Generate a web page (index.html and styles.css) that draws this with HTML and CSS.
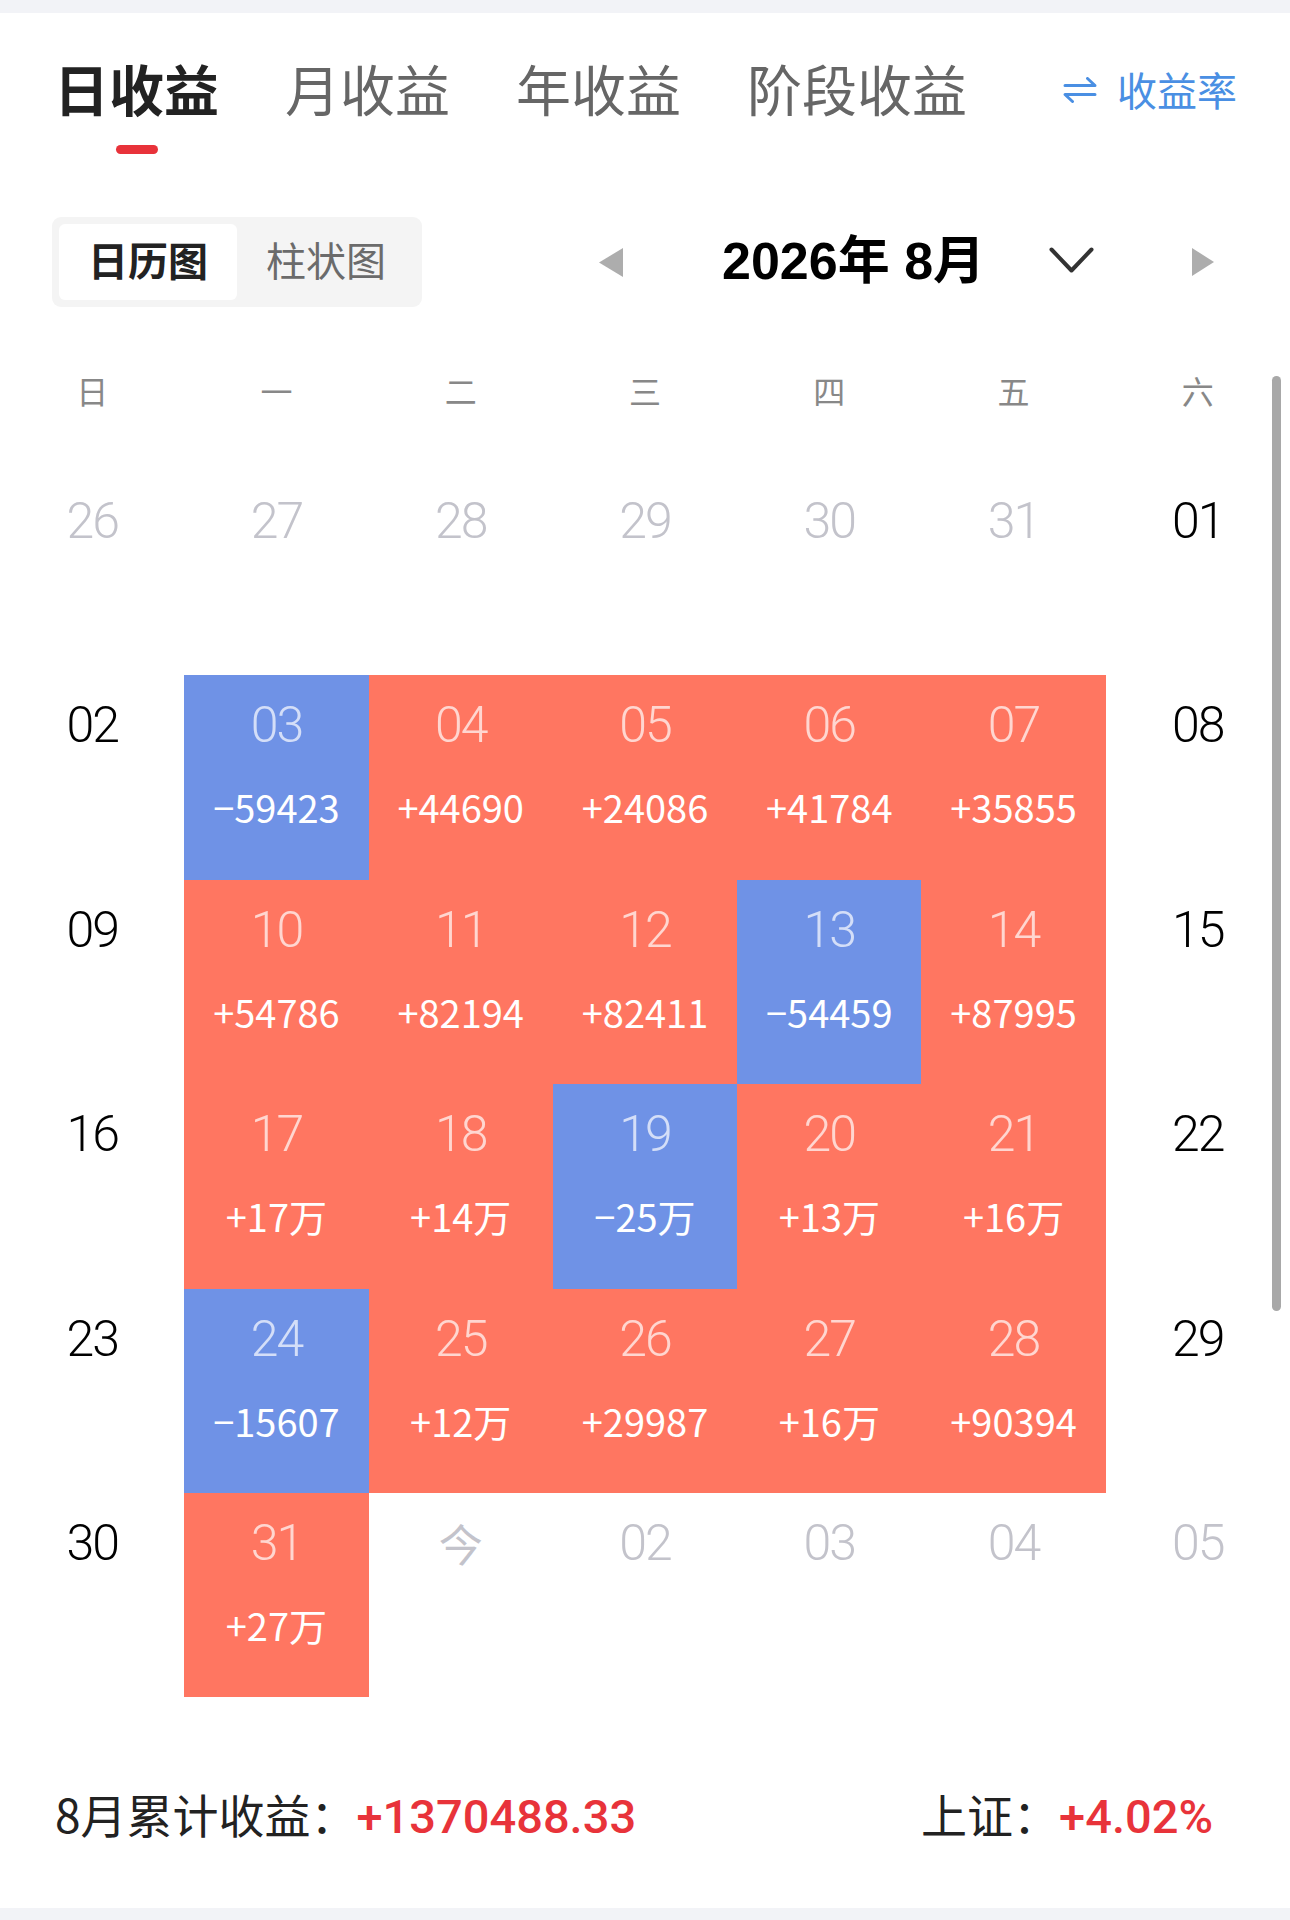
FILE: index.html
```html
<!DOCTYPE html>
<html lang="zh-CN">
<head>
<meta charset="utf-8">
<title>日收益</title>
<link rel="stylesheet" href="styles.css">
</head>
<body>
<div class="page">
  <div class="strip"></div>
  <header class="header">
    <nav class="tabs">
      <div class="tab active"><span>日收益</span><i class="bar"></i></div>
      <div class="tab">月收益</div>
      <div class="tab">年收益</div>
      <div class="tab">阶段收益</div>
    </nav>
    <div class="rate">
      <svg class="swap" width="34" height="26" viewBox="0 0 34 26"><path d="M2 8.5H32L24.5 1.5M32 17.5H2L9.5 24.5" fill="none" stroke="#4a8fe3" stroke-width="3" stroke-linecap="round" stroke-linejoin="round"/></svg>
      <span>收益率</span>
    </div>
  </header>

  <div class="toolbar">
    <div class="seg">
      <div class="seg-item on">日历图</div>
      <div class="seg-item">柱状图</div>
    </div>
    <svg class="tri prev" width="24" height="29" viewBox="0 0 24 29"><path d="M24 0V29L0 14.5Z" fill="#adadad"/></svg>
    <div class="title">2026年 8月</div>
    <svg class="chev" width="45" height="27" viewBox="0 0 45 27"><path d="M2.5 2.5L22.5 23.5L42.5 2.5" fill="none" stroke="#333" stroke-width="4" stroke-linecap="round" stroke-linejoin="round"/></svg>
    <svg class="tri next" width="22" height="28" viewBox="0 0 22 28"><path d="M0 0V28L22 14Z" fill="#adadad"/></svg>
  </div>

  <div class="weekdays">
    <div>日</div><div>一</div><div>二</div><div>三</div><div>四</div><div>五</div><div>六</div>
  </div>

  <div class="grid">
    <div class="cell out"><span class="d">26</span></div>
    <div class="cell out"><span class="d">27</span></div>
    <div class="cell out"><span class="d">28</span></div>
    <div class="cell out"><span class="d">29</span></div>
    <div class="cell out"><span class="d">30</span></div>
    <div class="cell out"><span class="d">31</span></div>
    <div class="cell"><span class="d">01</span></div>

    <div class="cell"><span class="d">02</span></div>
    <div class="cell loss"><span class="d">03</span><span class="v">−59423</span></div>
    <div class="cell gain"><span class="d">04</span><span class="v">+44690</span></div>
    <div class="cell gain"><span class="d">05</span><span class="v">+24086</span></div>
    <div class="cell gain"><span class="d">06</span><span class="v">+41784</span></div>
    <div class="cell gain"><span class="d">07</span><span class="v">+35855</span></div>
    <div class="cell"><span class="d">08</span></div>

    <div class="cell"><span class="d">09</span></div>
    <div class="cell gain"><span class="d">10</span><span class="v">+54786</span></div>
    <div class="cell gain"><span class="d">11</span><span class="v">+82194</span></div>
    <div class="cell gain"><span class="d">12</span><span class="v">+82411</span></div>
    <div class="cell loss"><span class="d">13</span><span class="v">−54459</span></div>
    <div class="cell gain"><span class="d">14</span><span class="v">+87995</span></div>
    <div class="cell"><span class="d">15</span></div>

    <div class="cell"><span class="d">16</span></div>
    <div class="cell gain"><span class="d">17</span><span class="v">+17万</span></div>
    <div class="cell gain"><span class="d">18</span><span class="v">+14万</span></div>
    <div class="cell loss"><span class="d">19</span><span class="v">−25万</span></div>
    <div class="cell gain"><span class="d">20</span><span class="v">+13万</span></div>
    <div class="cell gain"><span class="d">21</span><span class="v">+16万</span></div>
    <div class="cell"><span class="d">22</span></div>

    <div class="cell"><span class="d">23</span></div>
    <div class="cell loss"><span class="d">24</span><span class="v">−15607</span></div>
    <div class="cell gain"><span class="d">25</span><span class="v">+12万</span></div>
    <div class="cell gain"><span class="d">26</span><span class="v">+29987</span></div>
    <div class="cell gain"><span class="d">27</span><span class="v">+16万</span></div>
    <div class="cell gain"><span class="d">28</span><span class="v">+90394</span></div>
    <div class="cell"><span class="d">29</span></div>

    <div class="cell"><span class="d">30</span></div>
    <div class="cell gain"><span class="d">31</span><span class="v">+27万</span></div>
    <div class="cell out"><span class="d today">今</span></div>
    <div class="cell out"><span class="d">02</span></div>
    <div class="cell out"><span class="d">03</span></div>
    <div class="cell out"><span class="d">04</span></div>
    <div class="cell out"><span class="d">05</span></div>
  </div>

  <div class="summary">
    <div class="sum-item"><span class="label">8月累计收益：</span><span class="num">+1370488.33</span></div>
    <div class="sum-item"><span class="label">上证：</span><span class="num">+4.02%</span></div>
  </div>

  <div class="strip bottom"></div>
  <div class="scrollbar"></div>
</div>
</body>
</html>
```
FILE: styles.css
```css
* { box-sizing: border-box; }
html, body { margin: 0; padding: 0; background: #fff; }
body { font-family: "Noto Sans CJK SC", "Noto Sans", sans-serif; color: #222; }

.page { position: relative; width: 1290px; height: 1920px; overflow: hidden; }

.strip { height: 13px; background: #f2f3f7; }
.strip.bottom { height: 12px; margin-top: 72px; }

/* header tabs */
.header { display: flex; align-items: flex-start; padding: 47px 53px 0 54px; }
.tabs { display: flex; gap: 66px; align-items: flex-start; }
.tab { font-size: 55px; line-height: 54px; color: #666; white-space: nowrap; }
.tab.active { display: flex; flex-direction: column; align-items: center; color: #222; font-weight: 700; }
.bar { display: block; width: 42px; height: 9px; margin-top: 31px; border-radius: 5px; background: #e8323a; }
.rate { margin-left: auto; margin-top: 7px; display: flex; align-items: center; gap: 20px; color: #4a8fe3; font-size: 40px; line-height: 44px; }
.swap { display: block; margin-top: 2px; }

/* toolbar */
.toolbar { display: flex; align-items: center; height: 90px; margin-top: 63px; padding-left: 52px; }
.seg { display: flex; width: 370px; height: 90px; padding: 7px; background: #f4f4f4; border-radius: 9px; }
.seg-item { width: 178px; height: 76px; display: flex; align-items: center; justify-content: center; font-size: 40px; line-height: 40px; padding-bottom: 6px; color: #6b6b6b; border-radius: 6px; }
.seg-item.on { background: #fff; color: #222; font-weight: 700; }
.tri { display: block; flex: none; }
.prev { margin-left: 177px; }
.title { margin-left: 99px; width: 265px; white-space: nowrap; font-family: "Liberation Sans", "Noto Sans CJK SC", sans-serif; font-weight: 700; font-size: 52px; line-height: 60px; color: #000; margin-top: -2px; }
.chev { display: block; margin-left: 62px; margin-top: -4px; }
.next { margin-left: 98px; }

/* weekdays */
.weekdays { display: grid; grid-template-columns: repeat(7, 1fr); margin-top: 67px; font-size: 32px; line-height: 32px; color: #888; text-align: center; }

/* calendar */
.grid { display: grid; grid-template-columns: repeat(7, 1fr); grid-template-rows: repeat(6, 204.4px); margin-top: 65px; }
.cell { display: flex; flex-direction: column; align-items: center; color: #000; }
.cell.out { color: #c3c3cb; }
.cell.gain { background: #ff7661; }
.cell.loss { background: #6f92e6; }
.d { font-family: Roboto, "Liberation Sans", sans-serif; font-weight: 300; font-size: 50px; line-height: 50px; letter-spacing: -2px; margin-top: 25px; white-space: nowrap; }
.d.today { font-family: "Noto Sans CJK SC", sans-serif; font-weight: 400; letter-spacing: 0; font-size: 44px; line-height: 50px; }
.gain .d, .loss .d { color: rgba(255, 255, 255, 0.7); }
.v { font-family: "Noto Sans CJK SC", sans-serif; font-size: 38px; font-weight: 400; line-height: 38px; margin-top: 38px; color: #fff; white-space: nowrap; }

/* summary */
.summary { display: flex; justify-content: space-between; align-items: baseline; margin-top: 93px; padding: 0 77px 0 55px; height: 46px; }
.sum-item { display: flex; align-items: baseline; line-height: 46px; }
.label { font-size: 46px; color: #222; }
.num { font-family: Roboto, "Liberation Sans", sans-serif; font-size: 47px; font-weight: 500; color: #e8333a; }

.scrollbar { position: absolute; left: 1272px; top: 376px; width: 9px; height: 935px; border-radius: 5px; background: #a8a8a8; }
```
